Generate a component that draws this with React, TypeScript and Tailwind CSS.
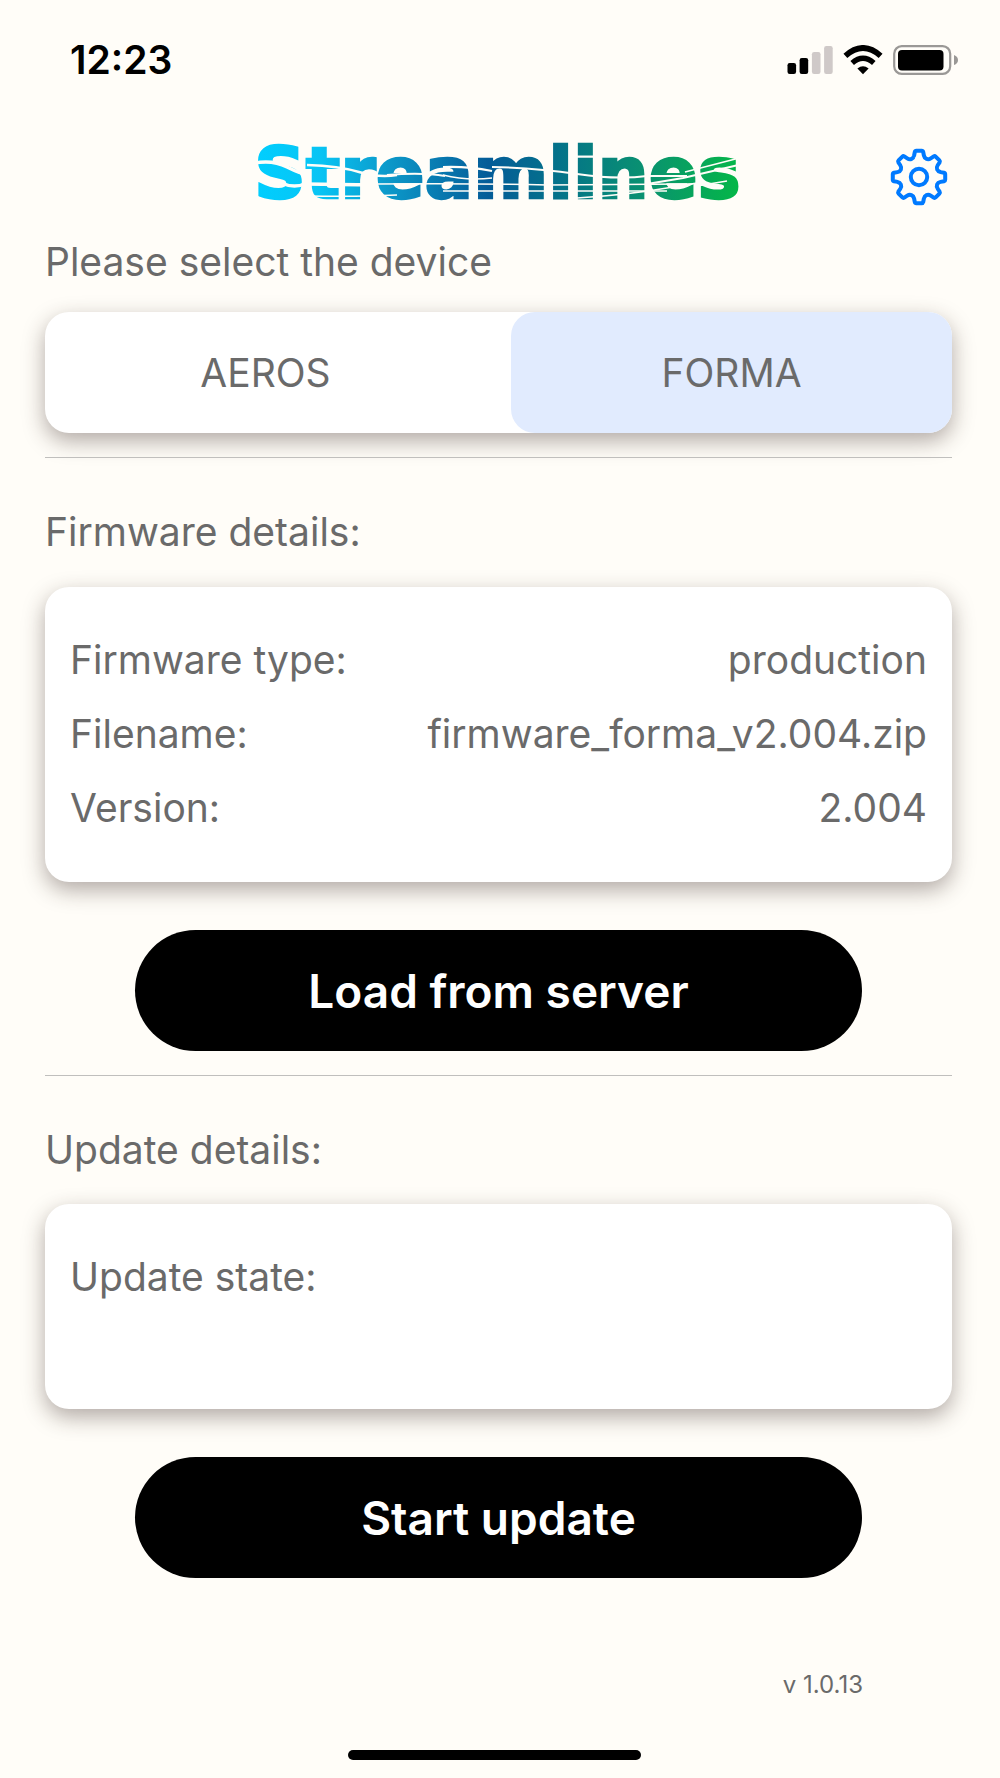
import { useState } from "react";

const TEETH = 8;

function rotate(x: number, y: number, step: number): string {
  const a = (step * 2 * Math.PI) / TEETH;
  const px = x * Math.cos(a) - y * Math.sin(a);
  const py = x * Math.sin(a) + y * Math.cos(a);
  return `${px.toFixed(2)} ${py.toFixed(2)}`;
}

function gearPath(): string {
  let d = "";
  for (let i = 0; i < TEETH; i++) {
    d += `${i === 0 ? "M" : "L"}${rotate(-4.9, -21.5, i)}`;
    d += `L${rotate(-4.2, -25, i)}`;
    d += `Q${rotate(-3.9, -26.2, i)} ${rotate(-2.7, -26.2, i)}`;
    d += `L${rotate(2.7, -26.2, i)}`;
    d += `Q${rotate(3.9, -26.2, i)} ${rotate(4.2, -25, i)}`;
    d += `L${rotate(4.9, -21.5, i)}`;
    d += `C${rotate(5.6, -18, i)} ${rotate(9, -16.8, i)} ${rotate(11.7, -18.7, i)}`;
  }
  return d + "Z";
}

function GearIcon() {
  return (
    <svg viewBox="-29 -29 58 58" className="size-[58px]" fill="none" stroke="#007aff" strokeWidth="4" strokeLinejoin="round" aria-hidden="true">
      <path d={gearPath()} />
      <circle r="8.2" />
    </svg>
  );
}

function Logo() {
  return (
    <svg viewBox="0 -10 504 92" className="w-[504px]" role="img" aria-label="Streamlines">
      <defs>
        <linearGradient id="brand" gradientUnits="userSpaceOnUse" x1="4" y1="0" x2="498" y2="0">
          <stop offset="0" stopColor="#00cfff" />
          <stop offset="0.14" stopColor="#08c4f4" />
          <stop offset="0.28" stopColor="#0c98c9" />
          <stop offset="0.48" stopColor="#045c98" />
          <stop offset="0.62" stopColor="#04728a" />
          <stop offset="0.8" stopColor="#0a9270" />
          <stop offset="1" stopColor="#04b945" />
        </linearGradient>
      </defs>
      <text x="7" y="57" fontFamily="DejaVu Sans" fontWeight="700" fontSize="72" fill="url(#brand)" stroke="url(#brand)" strokeWidth="2.4">
        Streamlines
      </text>
      <g fill="none" stroke="#fffdf8" strokeWidth="1.5">
        <path d="M4 23Q24 18 40 26T60 33" strokeWidth="3.4" />
        <path d="M2 41Q20 36 34 42T60 42" strokeWidth="3.4" />
        <path d="M60 24Q92 25 112 31T150 34" strokeWidth="2.4" />
        <path d="M58 43L128 44" strokeWidth="3.4" />
        <path d="M128 43Q220 42 300 44L440 43" />
        <path d="M140 34Q175 31 198 35" strokeWidth="2" />
        <path d="M196 26Q220 25 245 30" strokeWidth="2.2" />
        <path d="M196 34Q220 40 245 37" />
        <path d="M245 26Q290 27 330 33T400 35H440" strokeWidth="2" />
        <path d="M196 50H310L420 50" />
        <path d="M60 55Q110 56 150 54" />
        <path d="M330 57Q380 54 420 47L450 42" />
        <path d="M400 43L436 37L500 22" strokeWidth="2" />
        <path d="M438 31L500 15M450 45L480 40" />
      </g>
    </svg>
  );
}

function StatusBar() {
  return (
    <div className="flex items-center justify-between pt-9 pr-[41px] pl-[70px] text-black">
      <time className="text-[39px] leading-12 font-semibold">12:23</time>
      <div className="flex items-center">
        <svg viewBox="0 0 46 30" className="w-[46px]" aria-label="Cellular signal">
          <rect x="0.5" y="18" width="8.6" height="11" rx="2.2" />
          <rect x="12.6" y="13" width="8.6" height="16" rx="2.2" />
          <rect x="24.9" y="7" width="8.6" height="22" rx="2.2" fill="#cfc9c8" />
          <rect x="37.1" y="1" width="8.6" height="28" rx="2.2" fill="#cfc9c8" />
        </svg>
        <svg viewBox="0 0 40 30" className="ml-[10px] w-10" aria-label="Wi-Fi">
          <path d="M20 29.2L14.4 23.4Q20 19 25.6 23.4Z" />
          <path d="M9.2 18Q20 8.6 30.8 18" fill="none" stroke="#000" strokeWidth="5.4" />
          <path d="M2.4 10.8Q20 -4.8 37.6 10.8" fill="none" stroke="#000" strokeWidth="5.8" />
        </svg>
        <svg viewBox="0 0 66 30" className="ml-[10px] w-[66px]" aria-label="Battery">
          <rect x="1.2" y="1.2" width="56" height="27.6" rx="7.5" fill="none" stroke="#9a9896" strokeWidth="2.2" />
          <rect x="5" y="5" width="45.5" height="20.4" rx="4" />
          <path d="M61 10Q65 11.5 65 15T61 20Z" fill="#9a9896" />
        </svg>
      </div>
    </div>
  );
}

const cardClass = "rounded-3xl bg-white shadow-[0_8px_22px_rgba(50,35,30,0.38)]";
const actionClass =
  "mx-auto block h-[121px] w-[727px] max-w-full rounded-full bg-black text-[46px] leading-14 font-semibold text-white";

function DetailRow({ label, value }: { label: string; value: string }) {
  return (
    <div className="flex justify-between gap-6">
      <dt>{label}</dt>
      <dd>{value}</dd>
    </div>
  );
}

export default function App() {
  const [device, setDevice] = useState("FORMA");
  const segment = (name: string) =>
    `rounded-3xl ${device === name ? "bg-[#e1ebfe]" : "bg-transparent"}`;

  return (
    <div className="flex min-h-screen flex-col bg-[#fffdf8] font-[Inter,sans-serif] text-[39px] leading-12 text-[#6a6a6a]">
      <StatusBar />
      <main className="flex flex-col pr-12 pl-[45px]">
        <header className="mt-[47px] grid grid-cols-[1fr_auto_1fr] items-center">
          <h1 className="col-start-2">
            <Logo />
          </h1>
          <button type="button" aria-label="Settings" className="mr-1 justify-self-end">
            <GearIcon />
          </button>
        </header>

        <h2 className="mt-[15px]">Please select the device</h2>
        <div role="group" aria-label="Device" className={`mt-[26px] grid h-[121px] grid-cols-2 gap-[25px] ${cardClass}`}>
          <button type="button" aria-pressed={device === "AEROS"} onClick={() => setDevice("AEROS")} className={segment("AEROS")}>
            AEROS
          </button>
          <button type="button" aria-pressed={device === "FORMA"} onClick={() => setDevice("FORMA")} className={segment("FORMA")}>
            FORMA
          </button>
        </div>
        <hr className="mt-6 border-[#c0bfbd]" />

        <h2 className="mt-[50px]">Firmware details:</h2>
        <dl className={`mt-[31px] flex flex-col gap-[26px] px-[25px] pt-[49px] pb-[50px] ${cardClass}`}>
          <DetailRow label="Firmware type:" value="production" />
          <DetailRow label="Filename:" value="firmware_forma_v2.004.zip" />
          <DetailRow label="Version:" value="2.004" />
        </dl>
        <button type="button" className={`mt-12 ${actionClass}`}>
          Load from server
        </button>
        <hr className="mt-6 border-[#c0bfbd]" />

        <h2 className="mt-[50px]">Update details:</h2>
        <dl className={`mt-[30px] min-h-[205px] px-[25px] pt-[49px] ${cardClass}`}>
          <DetailRow label="Update state:" value="" />
        </dl>
        <button type="button" className={`mt-12 ${actionClass}`}>
          Start update
        </button>
      </main>
      <footer className="mt-auto">
        <p className="pr-[137px] text-right text-2xl">v 1.0.13</p>
        <div className="mt-[49px] mr-3 mb-[18px] flex justify-center">
          <div className="h-[10px] w-[293px] rounded-full bg-black" />
        </div>
      </footer>
    </div>
  );
}
